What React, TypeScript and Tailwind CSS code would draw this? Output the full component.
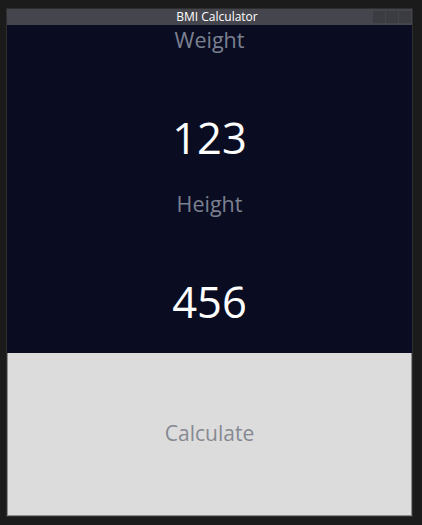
import React from "react";

export default function App() {
  const font = { fontFamily: '"Open Sans", "Noto Sans", "Liberation Sans", sans-serif' };
  return (
    <div className="w-[422px] h-[525px] bg-[#1b1b1b] pt-[8px] pl-[6px]" style={font}>
      <div className="w-[407px] h-[509px] border border-[#2e2e2e] flex flex-col">
        <div className="h-[16px] bg-[#45454d] flex items-center relative">
          <div className="flex-1 text-center text-white text-[12px] leading-[16px] pl-[15px]">BMI Calculator</div>
          <div className="absolute right-[1px] top-[2px] flex gap-[1px]">
            <div className="w-[12px] h-[12px] bg-[#3b3b42]" />
            <div className="w-[12px] h-[12px] bg-[#3b3b42]" />
            <div className="w-[12px] h-[12px] bg-[#3b3b42]" />
          </div>
        </div>
        <div className="h-[328px] bg-[#0a0d22] flex flex-col items-center">
          <div className="h-[31px] flex items-center text-[21.5px] text-[#7b8090]">Weight</div>
          <div className="mt-[57px] h-[50px] flex items-center text-[43.5px] text-white">123</div>
          <div className="mt-[26px] h-[31px] flex items-center text-[21.5px] text-[#7b8090]">Height</div>
          <div className="mt-[57px] h-[50px] flex items-center text-[43.5px] text-white">456</div>
        </div>
        <div className="flex-1 bg-[#dcdcdc] border-b border-r border-l border-[#8c8c8c] flex items-center justify-center text-[21px] text-[#868992]">
          Calculate
        </div>
      </div>
    </div>
  );
}
